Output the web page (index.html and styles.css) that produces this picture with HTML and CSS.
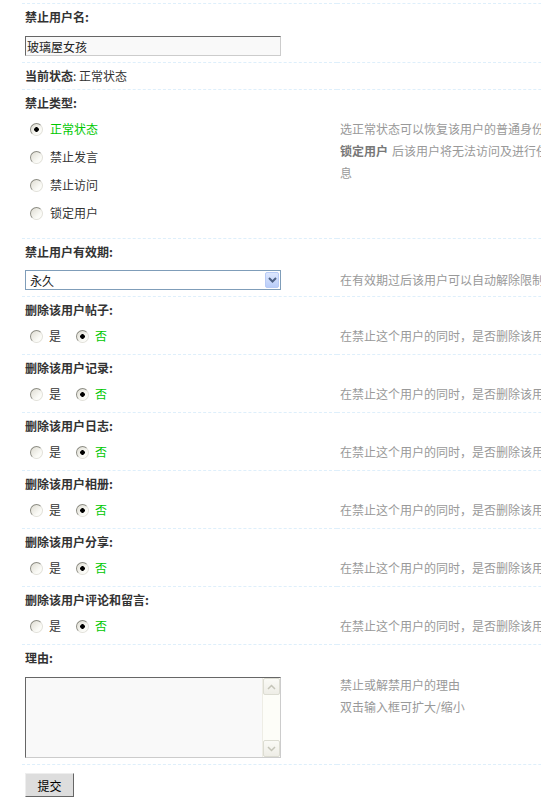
FILE: index.html
```html
<!DOCTYPE html>
<html lang="zh-CN">
<head>
    <meta charset="UTF-8">
    <title>禁止用户</title>
    <link rel="stylesheet" href="styles.css">
</head>
<body>

<div class="container">
<form>
<table class="tb">
    <colgroup><col class="col-form"><col class="col-tips"></colgroup>

    <tr><td colspan="2" class="td27">禁止用户名:</td></tr>
    <tr class="noborder">
        <td class="rowform pad-input"><input type="text" class="txt" value="玻璃屋女孩"></td>
        <td class="tips2"></td>
    </tr>

    <tr><td colspan="2" class="line"><b>当前状态</b>: 正常状态</td></tr>

    <tr><td colspan="2" class="td27">禁止类型:</td></tr>
    <tr class="noborder">
        <td class="rowform pad-list">
            <ul class="radios">
                <li class="checked"><label><input type="radio" name="bantype" checked>正常状态</label></li>
                <li><label><input type="radio" name="bantype">禁止发言</label></li>
                <li><label><input type="radio" name="bantype">禁止访问</label></li>
                <li><label><input type="radio" name="bantype">锁定用户</label></li>
            </ul>
        </td>
        <td class="tips2 tips-list">选正常状态可以恢复该用户的普通身份<br><b>锁定用户</b>后该用户将无法访问及进行任何操作或查看信息</td>
    </tr>

    <tr><td colspan="2" class="td27">禁止用户有效期:</td></tr>
    <tr class="noborder">
        <td class="rowform pad-select">
            <div class="select-wrap">
                <select class="ps">
                    <option>永久</option>
                    <option>1 天</option>
                    <option>7 天</option>
                    <option>30 天</option>
                </select>
                <span class="select-btn"><svg width="9" height="6" viewBox="0 0 9 6"><polyline points="1,1 4.5,4.5 8,1" fill="none" stroke="#4d6185" stroke-width="2"/></svg></span>
            </div>
        </td>
        <td class="tips2 tips-select">在有效期过后该用户可以自动解除限制</td>
    </tr>

    <tr><td colspan="2" class="td27">删除该用户帖子:</td></tr>
    <tr class="noborder">
        <td class="rowform pad-radio">
            <label class="yn"><input type="radio" name="delpost">是</label><label class="yn checked"><input type="radio" name="delpost" checked>否</label>
        </td>
        <td class="tips2">在禁止这个用户的同时，是否删除该用户的所有帖子</td>
    </tr>

    <tr><td colspan="2" class="td27">删除该用户记录:</td></tr>
    <tr class="noborder">
        <td class="rowform pad-radio">
            <label class="yn"><input type="radio" name="deldoing">是</label><label class="yn checked"><input type="radio" name="deldoing" checked>否</label>
        </td>
        <td class="tips2">在禁止这个用户的同时，是否删除该用户的所有记录</td>
    </tr>

    <tr><td colspan="2" class="td27">删除该用户日志:</td></tr>
    <tr class="noborder">
        <td class="rowform pad-radio">
            <label class="yn"><input type="radio" name="delblog">是</label><label class="yn checked"><input type="radio" name="delblog" checked>否</label>
        </td>
        <td class="tips2">在禁止这个用户的同时，是否删除该用户的所有日志</td>
    </tr>

    <tr><td colspan="2" class="td27">删除该用户相册:</td></tr>
    <tr class="noborder">
        <td class="rowform pad-radio">
            <label class="yn"><input type="radio" name="delalbum">是</label><label class="yn checked"><input type="radio" name="delalbum" checked>否</label>
        </td>
        <td class="tips2">在禁止这个用户的同时，是否删除该用户的所有相册</td>
    </tr>

    <tr><td colspan="2" class="td27">删除该用户分享:</td></tr>
    <tr class="noborder">
        <td class="rowform pad-radio">
            <label class="yn"><input type="radio" name="delshare">是</label><label class="yn checked"><input type="radio" name="delshare" checked>否</label>
        </td>
        <td class="tips2">在禁止这个用户的同时，是否删除该用户的所有分享</td>
    </tr>

    <tr><td colspan="2" class="td27">删除该用户评论和留言:</td></tr>
    <tr class="noborder">
        <td class="rowform pad-radio">
            <label class="yn"><input type="radio" name="delcomment">是</label><label class="yn checked"><input type="radio" name="delcomment" checked>否</label>
        </td>
        <td class="tips2">在禁止这个用户的同时，是否删除该用户的评论和留言</td>
    </tr>

    <tr><td colspan="2" class="td27">理由:</td></tr>
    <tr class="noborder">
        <td class="rowform pad-area">
            <div class="area">
                <textarea class="tarea"></textarea>
                <div class="scrollbar">
                    <span class="sb-btn"><svg width="9" height="6" viewBox="0 0 9 6"><polyline points="1,5 4.5,1.5 8,5" fill="none" stroke="#c4c4b8" stroke-width="1.5"/></svg></span>
                    <span class="sb-track"></span>
                    <span class="sb-btn"><svg width="9" height="6" viewBox="0 0 9 6"><polyline points="1,1 4.5,4.5 8,1" fill="none" stroke="#c4c4b8" stroke-width="1.5"/></svg></span>
                </div>
            </div>
        </td>
        <td class="tips2 tips-area">禁止或解禁用户的理由<br>双击输入框可扩大/缩小</td>
    </tr>

    <tr><td colspan="2" class="submit"><button type="button" class="btn">提交</button></td></tr>
</table>
</form>
</div>

</body>
</html>
```

FILE: styles.css
```css
body {
    margin: 0;
    overflow: hidden;
    font-family: "Noto Sans CJK SC", sans-serif;
    font-size: 12px;
    color: #333;
    background: #fff;
}
.container {
    padding: 3px 0 0 22px;
}
.tb {
    width: 620px;
    border-collapse: collapse;
    table-layout: fixed;
}
.col-form {
    width: 315px;
}
.col-tips {
    width: 305px;
}
.tb td {
    border-top: 1px dashed #deeffb;
    padding: 3px;
    vertical-align: top;
    line-height: 20px;
}
.tb .noborder td {
    border-top: none;
}
.td27 {
    font-weight: 700;
    padding: 4px 3px !important;
    line-height: 18px !important;
}
.line {
    padding: 4px 3px !important;
    line-height: 18px !important;
}
.checked {
    color: #00c800;
}

/* left column cells */
.pad-input {
    padding: 6px 3px !important;
}
.pad-select {
    padding: 5px 3px 6px !important;
}
.pad-radio {
    padding: 3px 3px 8px !important;
}
.pad-list {
    padding: 3px 3px 15px !important;
}
.pad-area {
    padding: 6px 3px !important;
}

/* right column tips */
.tips2 {
    color: #999;
    white-space: nowrap;
}
.tips2 b {
    color: #777;
    margin-right: 4px;
}
.tips-list {
    white-space: normal;
    padding-top: 2px !important;
    line-height: 22px !important;
}
.tips-select {
    padding-top: 5px !important;
}
.tips-area {
    padding-top: 3px !important;
    line-height: 22px !important;
}

/* text fields */
.txt {
    box-sizing: border-box;
    width: 256px;
    height: 20px;
    margin: 0;
    padding: 0 1px;
    border: 1px solid;
    border-color: #666 #ccc #ccc #666;
    background: #f9f9f9;
    font: 12px "Noto Sans CJK SC", sans-serif;
    color: #222;
    display: block;
}

.select-wrap {
    position: relative;
    width: 256px;
    height: 20px;
}
.ps {
    appearance: none;
    box-sizing: border-box;
    width: 256px;
    height: 20px;
    margin: 0;
    padding: 0 0 0 4px;
    border: 1px solid #7f9db9;
    border-radius: 0;
    background: #fff;
    font: 12px "Noto Sans CJK SC", sans-serif;
    color: #222;
    display: block;
}
.select-btn {
    position: absolute;
    top: 2px;
    right: 2px;
    bottom: 2px;
    width: 14px;
    box-sizing: border-box;
    border: 1px solid #b8cbf6;
    border-radius: 2px;
    background: linear-gradient(#dde7fe, #b9cdf9);
    display: flex;
    align-items: center;
    justify-content: center;
    pointer-events: none;
}

.area {
    box-sizing: border-box;
    width: 256px;
    height: 81px;
    display: flex;
    border: 1px solid;
    border-color: #666 #ccc #ccc #666;
    background: #f9f9f9;
}
.tarea {
    flex: 1;
    margin: 0;
    border: none;
    padding: 2px;
    resize: none;
    background: #f9f9f9;
    font: 12px "Noto Sans CJK SC", sans-serif;
    outline: none;
}
.scrollbar {
    width: 17px;
    display: flex;
    flex-direction: column;
    background: #fdfdf8;
    border-left: 1px solid #eeede5;
}
.sb-btn {
    height: 17px;
    box-sizing: border-box;
    border: 1px solid #dcdcd2;
    border-radius: 2px;
    background: linear-gradient(#fafaf6, #eeede6);
    display: flex;
    align-items: center;
    justify-content: center;
}
.sb-track {
    flex: 1;
}

/* radio buttons */
input[type="radio"] {
    appearance: none;
    box-sizing: border-box;
    width: 13px;
    height: 13px;
    margin: 0 6px 0 5px;
    border: 1px solid;
    border-color: #8d8d84 #e2e1da #e2e1da #8d8d84;
    border-radius: 50%;
    background: linear-gradient(135deg, #dedcd2, #fbfbf7 70%);
    flex: none;
}
input[type="radio"]:checked {
    background: radial-gradient(circle, #000 0 2px, transparent 2.6px),
        linear-gradient(135deg, #dedcd2, #fbfbf7 70%);
}
.radios {
    list-style: none;
    margin: 0;
    padding: 0;
}
.radios li {
    margin-bottom: 8px;
}
.radios li:last-child {
    margin-bottom: 0;
}
.radios label {
    display: flex;
    align-items: center;
    height: 20px;
}
.radios input[type="radio"] {
    margin-right: 7px;
}
.yn {
    display: inline-flex;
    align-items: center;
    height: 20px;
    margin-right: 10px;
    vertical-align: top;
}

/* submit */
.submit {
    padding: 8px 3px 3px !important;
}
.btn {
    box-sizing: border-box;
    width: 49px;
    height: 24px;
    margin: 0;
    padding: 0;
    border: 1px solid;
    border-color: #eee #666 #666 #eee;
    background: #ddd;
    font: 12px "Noto Sans CJK SC", sans-serif;
    color: #000;
    display: block;
}
```
